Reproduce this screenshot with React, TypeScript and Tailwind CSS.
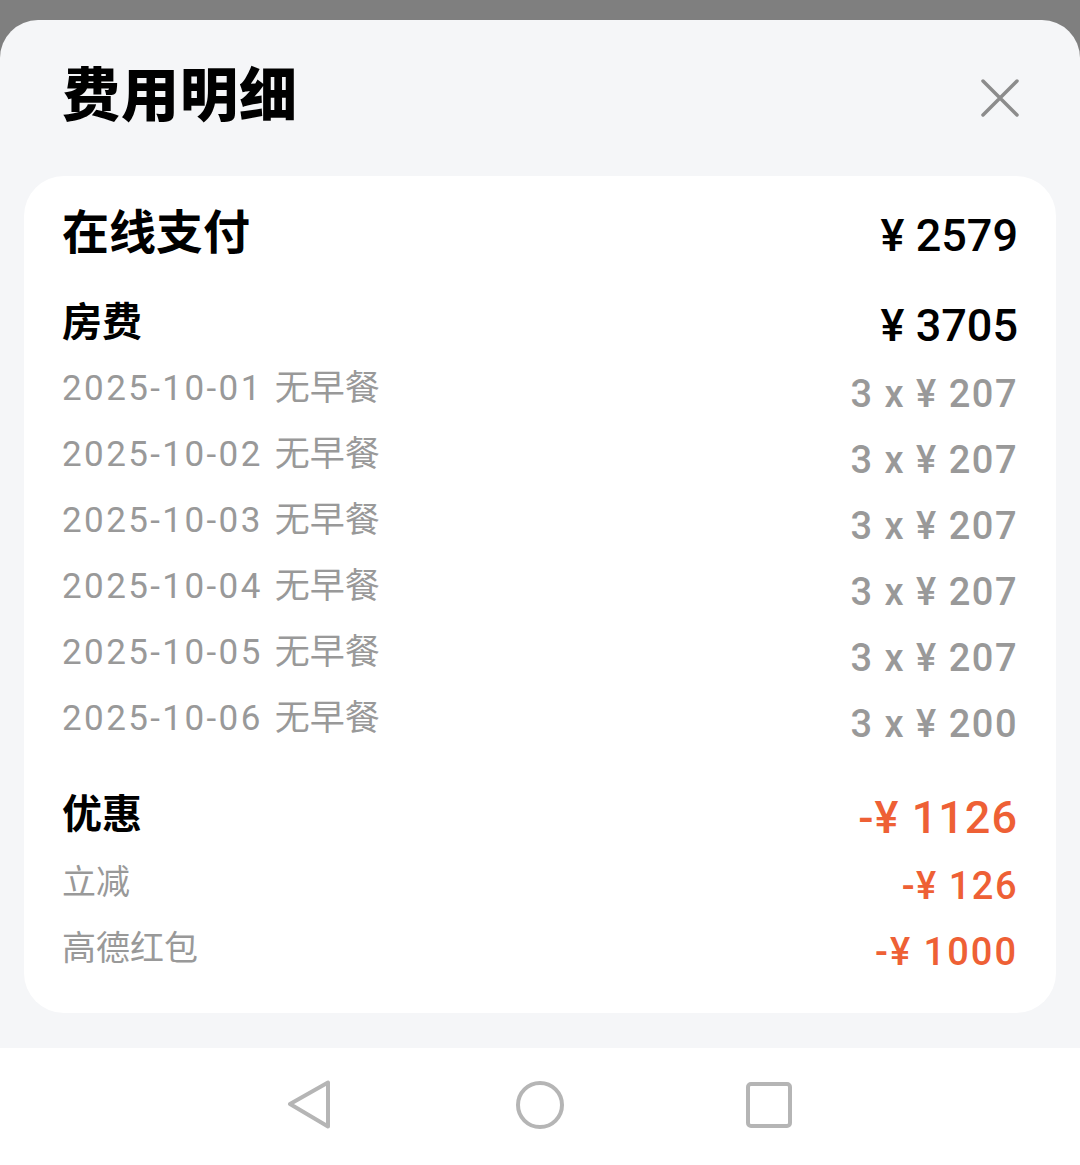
const font = { fontFamily: '"Roboto", "Noto Sans CJK SC", sans-serif' };

type Line = { date: string; meal: string; value: string };

const rooms: Line[] = [
  { date: "2025-10-01", meal: "无早餐", value: "3 x ¥ 207" },
  { date: "2025-10-02", meal: "无早餐", value: "3 x ¥ 207" },
  { date: "2025-10-03", meal: "无早餐", value: "3 x ¥ 207" },
  { date: "2025-10-04", meal: "无早餐", value: "3 x ¥ 207" },
  { date: "2025-10-05", meal: "无早餐", value: "3 x ¥ 207" },
  { date: "2025-10-06", meal: "无早餐", value: "3 x ¥ 200" },
];

const discounts = [
  { label: "立减", value: "-¥ 126", cls: "tracking-[1.5px]" },
  { label: "高德红包", value: "-¥ 1000", cls: "tracking-[2px]" },
];

const CloseIcon = () => (
  <svg width="40" height="40" viewBox="0 0 40 40" fill="none" className="mt-[4px]">
    <path d="M3 3L37 37M37 3L3 37" stroke="#8c8c8c" strokeWidth="3.5" strokeLinecap="round" />
  </svg>
);

const NavBar = () => (
  <div className="h-[117px] bg-white flex items-center pb-[4px]">
    <svg width="48" height="50" viewBox="0 0 48 50" fill="none" className="ml-[285px]">
      <path d="M5 24L43 2.5V46.5Z" stroke="#b5b5b5" strokeWidth="4" strokeLinejoin="round" />
    </svg>
    <svg width="50" height="50" viewBox="0 0 50 50" fill="none" className="ml-[182px]">
      <circle cx="25" cy="25" r="22" stroke="#b5b5b5" strokeWidth="4" />
    </svg>
    <svg width="46" height="46" viewBox="0 0 46 46" fill="none" className="ml-[181px]">
      <rect x="2" y="2" width="42" height="42" rx="3" stroke="#b5b5b5" strokeWidth="4" />
    </svg>
  </div>
);

export default function App() {
  return (
    <div className="w-[1080px] h-[1165px] bg-[#7f7f7f] pt-[20px] flex flex-col overflow-hidden" style={font}>
      <div className="flex-1 bg-[#f5f6f8] rounded-t-[38px] px-[24px] flex flex-col">
        <div className="h-[156px] flex items-center justify-between pl-[38px] pr-[36px] pb-[4px]">
          <h1 className="text-[58px] font-black text-black tracking-[1px]">费用明细</h1>
          <CloseIcon />
        </div>
        <div className="bg-white rounded-[40px] px-[38px] pt-[24px] pb-[32px]">
          <div className="h-[66px] flex items-center justify-between">
            <span className="text-[47px] font-bold text-black">在线支付</span>
            <span className="text-[45px] font-medium text-black mt-[6px]">¥ 2579</span>
          </div>
          <div className="h-[66px] mt-[24px] flex items-center justify-between">
            <span className="text-[40px] font-bold text-black">房费</span>
            <span className="text-[45px] font-medium text-black mt-[6px]">¥ 3705</span>
          </div>
          {rooms.map((r, i) => (
            <div key={i} className="h-[66px] flex items-center justify-between">
              <span className="text-[35px] text-[#999999]">
                <span className="tracking-[2.4px]">{r.date}</span>
                <span className="ml-[12px]">{r.meal}</span>
              </span>
              <span className="text-[38px] font-medium text-[#999999] tracking-[1.5px] mt-[10px]">{r.value}</span>
            </div>
          ))}
          <div className="h-[66px] mt-[30px] flex items-center justify-between">
            <span className="text-[40px] font-bold text-black">优惠</span>
            <span className="text-[45px] font-medium text-[#ee6035] tracking-[1px] mt-[6px]">-¥ 1126</span>
          </div>
          {discounts.map((d, i) => (
            <div key={i} className={`h-[66px] flex items-center justify-between ${i === 0 ? "mt-[1px]" : ""}`}>
              <span className="text-[34px] text-[#999999]">{d.label}</span>
              <span className={`text-[38px] font-medium text-[#ee6035] mt-[8px] ${d.cls}`}>{d.value}</span>
            </div>
          ))}
        </div>
        <div className="h-[35px]" />
      </div>
      <NavBar />
    </div>
  );
}
